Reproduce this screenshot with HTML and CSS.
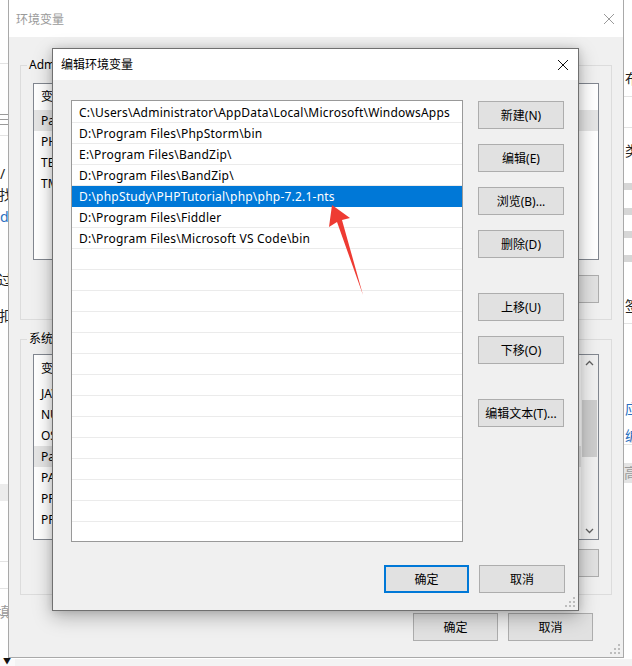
FILE: index.html
```html
<!DOCTYPE html>
<html lang="zh-CN">

<head>
    <meta charset="UTF-8">
    <meta name="viewport" content="width=device-width, initial-scale=1.0">
    <title>编辑环境变量</title>

    <link rel="stylesheet" href="styles.css">
</head>

<body>
    <div class="desktop">

        <!-- whatever window sits behind, only its edges show -->
        <div class="backdrop">
            <div class="bg-line l1"></div>
            <div class="bg-line l2"></div>
            <div class="bg-band b1"></div>
            <div class="bg-line l3"></div>
            <div class="bg-line l4"></div>
            <div class="bg-line r1"></div>
            <div class="bg-line r2"></div>
            <div class="bg-bar r3"></div>
            <div class="bg-bar r4"></div>
            <div class="bg-bar r5"></div>
            <div class="bg-bar r6"></div>
            <div class="bg-line r7"></div>
            <div class="bg-line r8"></div>
            <div class="bg-band r9"></div>

            <span class="glyph grey g-san">三</span>
            <span class="glyph g-slash">/</span>
            <span class="glyph g-zhao">找</span>
            <span class="glyph link g-d">d</span>
            <span class="glyph g-guo">过</span>
            <span class="glyph g-kou">扣</span>
            <span class="glyph grey g-tian">填</span>

            <span class="glyph g-bu">布</span>
            <span class="glyph g-lei">类</span>
            <span class="glyph g-qian">签</span>
            <span class="glyph link g-ying">应</span>
            <span class="glyph link g-bian">编</span>
            <span class="glyph grey g-gao">高</span>

            <div class="taskstrip"><span class="drop">▼</span></div>
        </div>

        <!-- 环境变量 -->
        <div class="window env-window">
            <div class="titlebar inactive">
                <span class="title">环境变量</span>
                <svg class="close" width="12" height="12" viewBox="0 0 12 12">
                    <path d="M1 1L11 11M11 1L1 11" stroke="#9a9a9a" stroke-width="1" fill="none" />
                </svg>
            </div>
            <div class="window-body">
                <div class="group user-group">
                    <span class="group-label">Administrator 的用户变量(U)</span>
                    <div class="varlist user-list">
                        <div class="var-head"><span>变量</span><span>值</span></div>
                        <div class="var-row picked"><span>Path</span><span>C:\Users\Administrator\AppData\Local\Microsoft\WindowsApps;</span></div>
                        <div class="var-row"><span>PHPSTORM</span><span>D:\Program Files\PhpStorm\bin</span></div>
                        <div class="var-row"><span>TEMP</span><span>%USERPROFILE%\AppData\Local\Temp</span></div>
                        <div class="var-row"><span>TMP</span><span>%USERPROFILE%\AppData\Local\Temp</span></div>
                    </div>
                    <div class="group-buttons">
                        <button class="btn">新建(N)...</button>
                        <button class="btn">编辑(E)...</button>
                        <button class="btn">删除(D)</button>
                    </div>
                </div>

                <div class="group system-group">
                    <span class="group-label">系统变量(S)</span>
                    <div class="varlist system-list">
                        <div class="var-rows">
                            <div class="var-head"><span>变量</span><span>值</span></div>
                            <div class="var-row"><span>JAVA_HOME</span><span>C:\Program Files\Java\jdk1.8.0</span></div>
                            <div class="var-row"><span>NUMBER_OF_PROCESSORS</span><span>4</span></div>
                            <div class="var-row"><span>OS</span><span>Windows_NT</span></div>
                            <div class="var-row picked"><span>Path</span><span>C:\Windows\system32;C:\Windows</span></div>
                            <div class="var-row"><span>PATHEXT</span><span>.COM;.EXE;.BAT;.CMD</span></div>
                            <div class="var-row"><span>PROCESSOR_ARCHITECTURE</span><span>AMD64</span></div>
                            <div class="var-row"><span>PROCESSOR_IDENTIFIER</span><span>Intel64 Family 6</span></div>
                        </div>
                        <div class="scrollbar">
                            <svg class="scroll-arrow" width="17" height="17" viewBox="0 0 17 17">
                                <path d="M5 10L8.5 6.5L12 10" stroke="#606060" stroke-width="1.3" fill="none" />
                            </svg>
                            <div class="scroll-track"><div class="scroll-thumb"></div></div>
                            <svg class="scroll-arrow" width="17" height="17" viewBox="0 0 17 17">
                                <path d="M5 7L8.5 10.5L12 7" stroke="#606060" stroke-width="1.3" fill="none" />
                            </svg>
                        </div>
                    </div>
                    <div class="group-buttons">
                        <button class="btn">新建(W)...</button>
                        <button class="btn">编辑(I)...</button>
                        <button class="btn">删除(L)</button>
                    </div>
                </div>

                <div class="footer env-footer">
                    <button class="btn">确定</button>
                    <button class="btn">取消</button>
                </div>
            </div>
            <svg class="grip" width="10" height="10" viewBox="0 0 10 10">
                <rect x="8" y="0" width="2" height="2" fill="#bdbdbd" />
                <rect x="4" y="4" width="2" height="2" fill="#bdbdbd" />
                <rect x="8" y="4" width="2" height="2" fill="#bdbdbd" />
                <rect x="0" y="8" width="2" height="2" fill="#bdbdbd" />
                <rect x="4" y="8" width="2" height="2" fill="#bdbdbd" />
                <rect x="8" y="8" width="2" height="2" fill="#bdbdbd" />
            </svg>
        </div>

        <!-- 编辑环境变量 -->
        <div class="window edit-dialog">
            <div class="titlebar">
                <span class="title">编辑环境变量</span>
                <svg class="close" width="12" height="12" viewBox="0 0 12 12">
                    <path d="M1 1L11 11M11 1L1 11" stroke="#111" stroke-width="1" fill="none" />
                </svg>
            </div>
            <div class="window-body dialog-body">
                <div class="dialog-main">
                    <div class="path-list">
                        <div class="path-row">C:\Users\Administrator\AppData\Local\Microsoft\WindowsApps</div>
                        <div class="path-row">D:\Program Files\PhpStorm\bin</div>
                        <div class="path-row">E:\Program Files\BandZip\</div>
                        <div class="path-row">D:\Program Files\BandZip\</div>
                        <div class="path-row selected">D:\phpStudy\PHPTutorial\php\php-7.2.1-nts</div>
                        <div class="path-row">D:\Program Files\Fiddler</div>
                        <div class="path-row">D:\Program Files\Microsoft VS Code\bin</div>
                        <div class="path-row"></div>
                        <div class="path-row"></div>
                        <div class="path-row"></div>
                        <div class="path-row"></div>
                        <div class="path-row"></div>
                        <div class="path-row"></div>
                        <div class="path-row"></div>
                        <div class="path-row"></div>
                        <div class="path-row"></div>
                        <div class="path-row"></div>
                        <div class="path-row"></div>
                        <div class="path-row"></div>
                        <div class="path-row"></div>
                        <div class="path-row"></div>
                        <div class="path-row"></div>
                    </div>
                    <div class="side-buttons">
                        <button class="btn">新建(N)</button>
                        <button class="btn">编辑(E)</button>
                        <button class="btn">浏览(B)...</button>
                        <button class="btn">删除(D)</button>
                        <button class="btn spaced">上移(U)</button>
                        <button class="btn">下移(O)</button>
                        <button class="btn spaced">编辑文本(T)...</button>
                    </div>
                </div>
                <div class="footer">
                    <button class="btn default">确定</button>
                    <button class="btn">取消</button>
                </div>
            </div>
            <svg class="grip" width="10" height="10" viewBox="0 0 10 10">
                <rect x="8" y="0" width="2" height="2" fill="#bdbdbd" />
                <rect x="4" y="4" width="2" height="2" fill="#bdbdbd" />
                <rect x="8" y="4" width="2" height="2" fill="#bdbdbd" />
                <rect x="0" y="8" width="2" height="2" fill="#bdbdbd" />
                <rect x="4" y="8" width="2" height="2" fill="#bdbdbd" />
                <rect x="8" y="8" width="2" height="2" fill="#bdbdbd" />
            </svg>
        </div>

        <!-- red pointer drawn on top -->
        <svg class="pointer" width="632" height="666" viewBox="0 0 632 666">
            <polygon points="332,205 350,218 342,220 363,295 337,222 329,227" fill="#ee3b33" />
        </svg>
    </div>
</body>

</html>
```

FILE: styles.css
```css
* {
    box-sizing: border-box;
}

body {
    margin: 0;
    background: #fff;
    font-family: "Noto Sans", "Noto Sans CJK SC", sans-serif;
    font-size: 12px;
    color: #000;
}

.desktop {
    position: relative;
    width: 632px;
    height: 666px;
    overflow: hidden;
    background: #fff;
}

/* ---- background window edges ---- */
.backdrop {
    position: absolute;
    inset: 0;
}

.bg-line {
    position: absolute;
    height: 1px;
    background: #e3e3e3;
}

.bg-band {
    position: absolute;
    background: #ececec;
}

.bg-bar {
    position: absolute;
    left: 624px;
    width: 8px;
    height: 7px;
    background: #d6d6d6;
}

.l1 { top: 63px; left: 0; width: 10px; }
.l2 { top: 135px; left: 0; width: 10px; }
.b1 { top: 484px; left: 0; width: 10px; height: 17px; }
.l3 { top: 561px; left: 0; width: 10px; }
.l4 { top: 588px; left: 0; width: 10px; }
.r1 { top: 96px; left: 624px; width: 8px; }
.r2 { top: 127px; left: 624px; width: 8px; }
.r3 { top: 183px; }
.r4 { top: 208px; }
.r5 { top: 231px; }
.r6 { top: 255px; }
.r7 { top: 323px; left: 624px; width: 8px; }
.r8 { top: 444px; left: 624px; width: 8px; }
.r9 { top: 463px; left: 624px; width: 8px; height: 20px; background: #e4e4e4; }

.glyph {
    position: absolute;
    font-size: 14px;
    line-height: 16px;
    color: #222;
}

.glyph.grey { color: #9a9a9a; }
.glyph.link { color: #2a6fc0; }

.g-san { left: -3px; top: 111px; }
.g-slash { left: 0; top: 166px; }
.g-zhao { left: -1px; top: 187px; }
.g-d { left: 0; top: 209px; }
.g-guo { left: -2px; top: 272px; }
.g-kou { left: -1px; top: 308px; }
.g-tian { left: -4px; top: 604px; }
.g-bu { left: 625px; top: 71px; }
.g-lei { left: 625px; top: 143px; }
.g-qian { left: 625px; top: 298px; }
.g-ying { left: 625px; top: 401px; }
.g-bian { left: 625px; top: 428px; }
.g-gao { left: 624px; top: 465px; }

.taskstrip {
    position: absolute;
    left: 0;
    top: 659px;
    width: 632px;
    height: 7px;
    background: #f3f3f3;
    border-left: 15px solid #fafafa;
}

.drop {
    position: absolute;
    left: -12px;
    top: -3px;
    font-size: 8px;
    line-height: 10px;
    color: #111;
}

/* ---- windows ---- */
.window {
    position: absolute;
    display: flex;
    flex-direction: column;
    background: #f0f0f0;
}

.titlebar {
    display: flex;
    align-items: center;
    justify-content: space-between;
    background: #fff;
    flex: none;
}

.titlebar.inactive .title {
    color: #9a9a9a;
}

.window-body {
    flex: 1;
    display: flex;
    flex-direction: column;
}

.grip {
    position: absolute;
    right: 3px;
    bottom: 3px;
}

.btn {
    font: inherit;
    color: #000;
    height: 28px;
    width: 85px;
    padding: 0;
    background: #e1e1e1;
    border: 1px solid #adadad;
    border-radius: 0;
}

.btn.default {
    border: 2px solid #0078d7;
}

.footer {
    display: flex;
    justify-content: flex-end;
    gap: 11px;
}

/* 环境变量 */
.env-window {
    left: 8px;
    top: -1px;
    width: 616px;
    height: 659px;
    border: 1px solid #a9a9a9;
}

.env-window .titlebar {
    height: 37px;
    padding: 0 8px 0 7px;
}

.env-window .window-body {
    padding: 28px 11px 0 11px;
}

.group {
    display: flex;
    flex-direction: column;
    width: 592px;
    border: 1px solid #dcdcdc;
    padding: 0 12px;
}

.group-label {
    align-self: flex-start;
    margin: -9px 0 0 -6px;
    padding: 0 2px;
    line-height: 16px;
    background: #f0f0f0;
}

.user-group {
    height: 255px;
}

.system-group {
    height: 256px;
    margin-top: 19px;
}

.varlist {
    background: #fff;
    border: 1px solid #828790;
    overflow: hidden;
}

.user-list {
    margin-top: 10px;
    height: 177px;
}

.system-list {
    margin-top: 7px;
    height: 186px;
    display: flex;
}

.var-rows {
    flex: 1;
    min-width: 0;
}

.var-head,
.var-row {
    display: grid;
    grid-template-columns: 150px 1fr;
    padding-left: 7px;
    white-space: nowrap;
    overflow: hidden;
}

.var-head {
    height: 26px;
    line-height: 26px;
}

.system-list .var-head {
    height: 28px;
    line-height: 28px;
}

.var-row {
    height: 21px;
    line-height: 21px;
}

.var-row.picked {
    background: #e5e5e5;
}

.scrollbar {
    flex: none;
    width: 17px;
    display: flex;
    flex-direction: column;
    background: #f0f0f0;
}

.scroll-track {
    flex: 1;
    padding: 28px 1px 0;
}

.scroll-thumb {
    height: 57px;
    background: #cdcdcd;
}

.group-buttons {
    display: flex;
    justify-content: flex-end;
    gap: 10px;
}

.user-group .group-buttons {
    margin-top: 15px;
}

.system-group .group-buttons {
    margin-top: 9px;
}

.env-footer {
    margin-top: 18px;
    padding-right: 19px;
    gap: 10px;
}

/* 编辑环境变量 */
.edit-dialog {
    left: 52px;
    top: 48px;
    width: 527px;
    height: 563px;
    border: 1px solid #707070;
    box-shadow: 0 6px 18px rgba(0, 0, 0, 0.28), 0 0 8px rgba(0, 0, 0, 0.12);
}

.edit-dialog .titlebar {
    height: 31px;
    padding: 0 9px 0 8px;
}

.edit-dialog .title {
    margin-top: -2px;
}

.dialog-body {
    padding: 20px 13px 0 18px;
}

.dialog-main {
    display: flex;
    gap: 15px;
}

.path-list {
    width: 392px;
    height: 442px;
    background: #fff;
    border: 1px solid #999;
    padding-top: 1px;
    overflow: hidden;
}

.path-row {
    height: 21px;
    line-height: 21px;
    padding-left: 7px;
    border-bottom: 1px solid #ebebeb;
    white-space: nowrap;
    letter-spacing: 0.22px;
}

.path-row.selected {
    background: #0078d7;
    border-bottom-color: #0078d7;
    color: #fff;
}

.side-buttons {
    display: flex;
    flex-direction: column;
    padding-top: 1px;
}

.side-buttons .btn {
    width: 86px;
}

.side-buttons .btn + .btn {
    margin-top: 15px;
}

.side-buttons .btn.spaced {
    margin-top: 35px;
}

.dialog-body .footer {
    margin-top: 23px;
    gap: 10px;
}

.dialog-body .footer .btn:last-child {
    width: 86px;
}

.pointer {
    position: absolute;
    left: 0;
    top: 0;
    pointer-events: none;
}
```
